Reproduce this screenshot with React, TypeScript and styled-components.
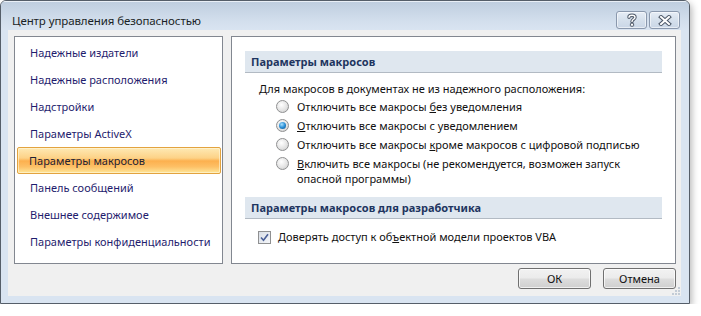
import styled, { createGlobalStyle } from "styled-components";

const GlobalStyle = createGlobalStyle`
  html, body {
    margin: 0;
    padding: 0;
    background: #ffffff;
  }
  body {
    font-family: "Noto Sans", "Open Sans", sans-serif;
    font-size: 11px;
  }
`;

const navItems = [
  "Надежные издатели",
  "Надежные расположения",
  "Надстройки",
  "Параметры ActiveX",
  "Параметры макросов",
  "Панель сообщений",
  "Внешнее содержимое",
  "Параметры конфиденциальности",
];

const QuestionGlyph = () => (
  <svg width="12" height="14" viewBox="0 0 12 14">
    <g fill="none" strokeLinecap="round" strokeLinejoin="round">
      <path d="M3 4.2 C3 1.6 9 1.6 9 4.2 C9 6.4 6 6.2 6 8.6" stroke="#4d5868" strokeWidth="3.4" />
      <path d="M3 4.2 C3 1.6 9 1.6 9 4.2 C9 6.4 6 6.2 6 8.6" stroke="#ffffff" strokeWidth="1.4" />
    </g>
    <rect x="4.4" y="10.2" width="3.2" height="3" rx="0.6" fill="#ffffff" stroke="#4d5868" strokeWidth="1" />
  </svg>
);

const CloseGlyph = () => (
  <svg width="14" height="11" viewBox="0 0 14 11">
    <g strokeLinecap="square">
      <path d="M3 2 L11 9 M11 2 L3 9" stroke="#4d5868" strokeWidth="4" />
      <path d="M3 2 L11 9 M11 2 L3 9" stroke="#ffffff" strokeWidth="2" />
    </g>
  </svg>
);

const CheckGlyph = () => (
  <svg width="9" height="9" viewBox="0 0 9 9">
    <path d="M1 4.5 L3.5 7.2 L8 1.2" fill="none" stroke="#4a5f97" strokeWidth="1.6" />
  </svg>
);

const GripGlyph = () => (
  <svg width="8" height="8" viewBox="0 0 8 8">
    {[
      [6, 0],
      [3, 3],
      [6, 3],
      [0, 6],
      [3, 6],
      [6, 6],
    ].map(([x, y]) => (
      <rect key={`${x}-${y}`} x={x} y={y} width="2" height="2" fill="#c3ccd6" />
    ))}
  </svg>
);

export default function App() {
  return (
    <>
      <GlobalStyle />
      <Window>
        <TitleBar>
          <Title>Центр управления безопасностью</Title>
          <CaptionButtons>
            <CaptionButton>
              <QuestionGlyph />
            </CaptionButton>
            <CaptionButton>
              <CloseGlyph />
            </CaptionButton>
          </CaptionButtons>
        </TitleBar>
        <Frame>
          <Client>
            <Panels>
              <NavList>
                {navItems.map((item, i) => (
                  <NavItem key={item} $selected={i === 4}>
                    {item}
                  </NavItem>
                ))}
              </NavList>
              <Content>
                <SectionHeader>Параметры макросов</SectionHeader>
                <SectionBody>
                  <Lead>Для макросов в документах не из надежного расположения:</Lead>
                  <Options>
                    <OptionRow>
                      <Radio />
                      <OptionText>
                        Отключить все макросы <u>б</u>ез уведомления
                      </OptionText>
                    </OptionRow>
                    <OptionRow>
                      <Radio $checked />
                      <OptionText>
                        <u>О</u>тключить все макросы с уведомлением
                      </OptionText>
                    </OptionRow>
                    <OptionRow>
                      <Radio />
                      <OptionText>
                        Отключить все макросы <u>к</u>роме макросов с цифровой подписью
                      </OptionText>
                    </OptionRow>
                    <OptionRow>
                      <Radio />
                      <OptionText>
                        <u>В</u>ключить все макросы (не рекомендуется, возможен запуск
                        <br />
                        опасной программы)
                      </OptionText>
                    </OptionRow>
                  </Options>
                </SectionBody>
                <SectionHeader $gap>Параметры макросов для разработчика</SectionHeader>
                <CheckRow>
                  <Checkbox>
                    <CheckGlyph />
                  </Checkbox>
                  <span>
                    Доверять доступ к об<u>ъ</u>ектной модели проектов VBA
                  </span>
                </CheckRow>
              </Content>
            </Panels>
            <ButtonRow>
              <DialogButton>ОК</DialogButton>
              <DialogButton>Отмена</DialogButton>
            </ButtonRow>
            <Grip>
              <GripGlyph />
            </Grip>
          </Client>
        </Frame>
      </Window>
    </>
  );
}

const Window = styled.div`
  width: 688px;
  border: 1px solid #555e69;
  border-radius: 6px 6px 0 0;
  background: #d9e4f1;
  box-shadow: 2px 3px 7px rgba(0, 0, 0, 0.28);
  overflow: hidden;
`;

const TitleBar = styled.div`
  height: 29px;
  box-sizing: border-box;
  display: flex;
  align-items: flex-start;
  justify-content: space-between;
  padding: 9px 9px 0 11px;
  background: linear-gradient(#bfcedf, #d3dfed 70%, #d9e4f1);
  border-top: 1px solid #e9eff6;
`;

const Title = styled.div`
  margin-top: 2px;
  line-height: 16px;
  font-size: 11.5px;
  letter-spacing: -0.1px;
  color: #1a1f26;
`;

const CaptionButtons = styled.div`
  display: flex;
  gap: 2px;
`;

const CaptionButton = styled.div`
  width: 29px;
  height: 16px;
  display: flex;
  align-items: center;
  justify-content: center;
  border: 1px solid #8a98ad;
  border-radius: 3px;
  background: linear-gradient(#e6edf6, #d5e0ec 50%, #c9d6e6);
  box-shadow: inset 0 0 0 1px rgba(255, 255, 255, 0.55);
`;

const Frame = styled.div`
  padding: 0 8px 7px 7px;
`;

const Client = styled.div`
  position: relative;
  height: 266px;
  box-sizing: border-box;
  padding: 6px 5px 0 6px;
  background: #f0f0f0;
  display: flex;
  flex-direction: column;
`;

const Panels = styled.div`
  display: flex;
  gap: 8px;
  height: 228px;
`;

const NavList = styled.div`
  flex: none;
  width: 209px;
  box-sizing: border-box;
  border: 1px solid #828790;
  background: #ffffff;
  padding-top: 2px;
  display: flex;
  flex-direction: column;
`;

const NavItem = styled.div<{ $selected?: boolean }>`
  height: 27px;
  box-sizing: border-box;
  margin: 0 1px 0 2px;
  padding-left: 12px;
  display: flex;
  align-items: center;
  white-space: nowrap;
  color: #1f1d6e;
  border: 1px solid transparent;
  border-radius: 2px;
  ${(p) =>
    p.$selected &&
    `
    padding-left: 11px;
    color: #1e2233;
    border-color: #e3a33f;
    background: linear-gradient(#fee9b4, #fdd287 40%, #fcb04e 52%, #fdc066 75%, #fee79a);
    box-shadow: inset 0 0 0 1px rgba(255, 248, 220, 0.6);
  `}
`;

const Content = styled.div`
  flex: 1;
  min-width: 0;
  box-sizing: border-box;
  border: 1px solid #828790;
  background: #ffffff;
  padding: 14px 13px 0 13px;
  display: flex;
  flex-direction: column;
`;

const SectionHeader = styled.div<{ $gap?: boolean }>`
  height: 22px;
  box-sizing: border-box;
  padding-left: 6px;
  display: flex;
  align-items: center;
  background: #dfe7ef;
  border-bottom: 1px solid #b2bac3;
  font-weight: 700;
  color: #1e3560;
  margin-top: ${(p) => (p.$gap ? "9px" : "0")};
`;

const SectionBody = styled.div`
  padding: 8px 0 0 14px;
  color: #111111;
`;

const Lead = styled.div`
  line-height: 16px;
`;

const Options = styled.div`
  display: flex;
  flex-direction: column;
  padding-left: 17px;
`;

const OptionRow = styled.div`
  display: flex;
  align-items: flex-start;
  gap: 8px;
  padding: 2px 0;
  line-height: 15px;
`;

const OptionText = styled.span`
  white-space: nowrap;
`;

const Radio = styled.span<{ $checked?: boolean }>`
  position: relative;
  flex: none;
  width: 13px;
  height: 13px;
  margin-top: 1px;
  box-sizing: border-box;
  border-radius: 50%;
  border: 1px solid #8f9091;
  background: radial-gradient(circle at 40% 35%, #ffffff, #e4e4e4 55%, #c9c9c9);
  &::after {
    content: "";
    display: ${(p) => (p.$checked ? "block" : "none")};
    position: absolute;
    left: 2px;
    top: 2px;
    width: 7px;
    height: 7px;
    border-radius: 50%;
    background: radial-gradient(circle at 40% 35%, #a8e0ff, #2a8fd6 50%, #0b4c86);
  }
`;

const CheckRow = styled.div`
  display: flex;
  align-items: center;
  gap: 7px;
  margin: 10px 0 0 13px;
  line-height: 16px;
  color: #111111;
`;

const Checkbox = styled.span`
  flex: none;
  width: 13px;
  height: 13px;
  box-sizing: border-box;
  border: 1px solid #8f9091;
  background: linear-gradient(135deg, #d9dee6, #f4f6f9);
  display: flex;
  align-items: center;
  justify-content: center;
`;

const ButtonRow = styled.div`
  display: flex;
  justify-content: flex-end;
  gap: 12px;
  margin-top: 4px;
`;

const DialogButton = styled.div`
  width: 73px;
  height: 21px;
  box-sizing: border-box;
  display: flex;
  align-items: center;
  justify-content: center;
  border: 1px solid #707070;
  border-radius: 3px;
  background: linear-gradient(#f2f2f2, #ebebeb 48%, #dddddd 52%, #cfcfcf);
  box-shadow: inset 0 0 0 1px rgba(255, 255, 255, 0.7);
  color: #111111;
`;

const Grip = styled.div`
  position: absolute;
  right: 1px;
  bottom: 1px;
  display: flex;
`;
